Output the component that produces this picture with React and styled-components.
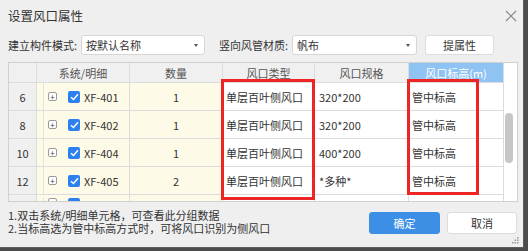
import React from "react"
import styled, { createGlobalStyle } from "styled-components"

const GlobalStyle = createGlobalStyle`
  html, body {
    margin: 0;
    padding: 0;
    background: #4a4d4c;
  }
  body {
    font-family: "Noto Sans CJK SC", "Noto Sans", sans-serif;
    color: #333;
  }
`

const Dialog = styled.div`
  position: relative;
  box-sizing: border-box;
  width: 524px;
  height: 248px;
  padding: 0 5px 0 8px;
  background: #efefef;
  border-right: 1px solid #5c5c5c;
  border-bottom: 1px solid #5c5c5c;
  display: flex;
  flex-direction: column;
`

const TitleBar = styled.div`
  height: 31px;
  display: flex;
  align-items: center;
  justify-content: space-between;
  font-size: 12.5px;
  color: #333;
`

const Close = styled.div`
  width: 12px;
  height: 12px;
  margin-right: 1px;
  display: flex;
`

const Toolbar = styled.div`
  margin-top: 4px;
  height: 20px;
  display: flex;
  align-items: center;
  font-size: 11px;
`

const Label = styled.span`
  width: ${(p) => p.$w}px;
  margin-left: ${(p) => p.$ml || 0}px;
  white-space: nowrap;
`

const Select = styled.div`
  box-sizing: border-box;
  width: ${(p) => p.$w}px;
  height: 20px;
  padding: 0 6px 0 4px;
  background: #fff;
  border: 1px solid #d6d6d6;
  border-radius: 3px;
  display: flex;
  align-items: center;
  justify-content: space-between;
  &::after {
    content: "";
    border-left: 2.5px solid transparent;
    border-right: 2.5px solid transparent;
    border-top: 3px solid #555;
  }
`

const Button = styled.div`
  box-sizing: border-box;
  width: ${(p) => p.$w}px;
  height: ${(p) => p.$h || 20}px;
  margin-left: ${(p) => p.$ml || 0}px;
  display: flex;
  align-items: center;
  justify-content: center;
  font-size: 11px;
  border-radius: 3px;
  background: ${(p) => (p.$primary ? "#3d8fe5" : "#fff")};
  color: ${(p) => (p.$primary ? "#fff" : "#333")};
  border: 1px solid ${(p) => (p.$primary ? "#3d8fe5" : "#dcdcdc")};
`

const Table = styled.div`
  margin-top: 7px;
  height: 140px;
  box-sizing: border-box;
  border: 1px solid #d0d0d0;
  background: #fff;
  display: flex;
  overflow: hidden;
`

const Grid = styled.div`
  display: grid;
  grid-template-columns: 28px 93px 93px 92px 94px 95px;
  grid-template-rows: 20px;
  grid-auto-rows: 28px;
  font-size: 11px;
  align-content: start;
`

const Cell = styled.div`
  box-sizing: border-box;
  border-right: 1px solid #dcdcdc;
  border-bottom: 1px solid #dcdcdc;
  display: flex;
  align-items: center;
  justify-content: ${(p) => (p.$center ? "center" : "flex-start")};
  padding-left: ${(p) => (p.$center ? 0 : p.$pl || 3)}px;
  background: ${(p) =>
    p.$kind === "gray" ? "#f0f0f0" : p.$kind === "yellow" ? "#fdfbe7" : "#fff"};
  color: #333;
  white-space: nowrap;
  overflow: hidden;
`

const Head = styled(Cell)`
  justify-content: center;
  padding-left: 0;
  color: ${(p) => (p.$active ? "#fff" : "#555")};
  background: ${(p) => (p.$active ? "#8fc3f3" : "#f0f0f0")};
`

const TreeCell = styled(Cell)`
  padding-left: 6px;
  background: #fdfbe7;
  align-items: ${(p) => (p.$partial ? "flex-start" : "center")};
  padding-top: ${(p) => (p.$partial ? 3 : 0)}px;
`

const TreeLine = styled.div`
  align-self: stretch;
  border-left: 1px solid #e2e2e2;
  width: 4px;
`

const Plus = styled.div`
  box-sizing: border-box;
  width: 9px;
  height: 9px;
  border: 1px solid #9a9a9a;
  border-radius: 2px;
  background: #fff;
  display: flex;
  align-items: center;
  justify-content: center;
  font-size: 8px;
  line-height: 1;
  color: #444;
  margin-right: 11px;
`

const Check = styled.div`
  width: 12px;
  height: 12px;
  border-radius: 2px;
  background: #2d80f0;
  display: flex;
  align-items: center;
  justify-content: center;
  margin-right: 4px;
`

const Scroll = styled.div`
  width: 13px;
  position: relative;
  background: #fff;
`

const Thumb = styled.div`
  position: absolute;
  left: 1px;
  top: 50px;
  width: 8px;
  height: 50px;
  border-radius: 4px;
  background: #c6c6c6;
`

const Footer = styled.div`
  margin-top: 7px;
  display: flex;
  justify-content: space-between;
  align-items: flex-start;
`

const Notes = styled.div`
  font-size: 11px;
  line-height: 13px;
  color: #333;
`

const Actions = styled.div`
  margin-top: 3px;
  display: flex;
  gap: 7px;
  margin-right: 1px;
`

const Mark = styled.div`
  position: absolute;
  box-sizing: border-box;
  left: ${(p) => p.$x}px;
  top: ${(p) => p.$y}px;
  width: ${(p) => p.$w}px;
  height: ${(p) => p.$h}px;
  border: 3px solid #ee2525;
  pointer-events: none;
`

const Grip = styled.svg`
  position: absolute;
  right: 4px;
  bottom: 3px;
`

const rows = [
  { no: 6, name: "XF-401", qty: 1, type: "单层百叶侧风口", spec: "320*200", elev: "管中标高" },
  { no: 8, name: "XF-402", qty: 1, type: "单层百叶侧风口", spec: "320*200", elev: "管中标高" },
  { no: 10, name: "XF-404", qty: 1, type: "单层百叶侧风口", spec: "400*200", elev: "管中标高" },
  { no: 12, name: "XF-405", qty: 2, type: "单层百叶侧风口", spec: "*多种*", elev: "管中标高" },
]

const CheckIcon = () => (
  <svg width="9" height="8" viewBox="0 0 9 8">
    <path d="M1 4.2 L3.5 6.5 L8 1.3" fill="none" stroke="#fff" strokeWidth="1.5" />
  </svg>
)

export default function App() {
  return (
    <>
      <GlobalStyle />
      <Dialog>
        <TitleBar>
          <span>设置风口属性</span>
          <Close>
            <svg width="12" height="12" viewBox="0 0 12 12">
              <path d="M1 1 L11 11 M11 1 L1 11" stroke="#8a8a8a" strokeWidth="1.2" />
            </svg>
          </Close>
        </TitleBar>
        <Toolbar>
          <Label $w={73}>建立构件模式:</Label>
          <Select $w={124}>按默认名称</Select>
          <Label $w={73} $ml={14}>竖向风管材质:</Label>
          <Select $w={125}>帆布</Select>
          <Button $w={69} $ml={8}>提属性</Button>
        </Toolbar>
        <Table>
          <Grid>
            <Head />
            <Head>系统/明细</Head>
            <Head>数量</Head>
            <Head>风口类型</Head>
            <Head>风口规格</Head>
            <Head $active>风口标高(m)</Head>
            {rows.map((r) => (
              <React.Fragment key={r.no}>
                <Cell $center $kind="gray">{r.no}</Cell>
                <TreeCell>
                  <TreeLine />
                  <Plus>+</Plus>
                  <Check><CheckIcon /></Check>
                  {r.name}
                </TreeCell>
                <Cell $center $kind="yellow">{r.qty}</Cell>
                <Cell $pl={3}>{r.type}</Cell>
                <Cell $pl={4}>{r.spec}</Cell>
                <Cell $pl={3}>{r.elev}</Cell>
              </React.Fragment>
            ))}
            <Cell $kind="gray" />
            <TreeCell $partial>
              <TreeLine />
              <Plus />
              <Check />
            </TreeCell>
            <Cell $kind="yellow" />
            <Cell />
            <Cell />
            <Cell />
          </Grid>
          <Scroll>
            <Thumb />
          </Scroll>
        </Table>
        <Footer>
          <Notes>
            <div>1.双击系统/明细单元格，可查看此分组数据</div>
            <div>2.当标高选为管中标高方式时，可将风口识别为侧风口</div>
          </Notes>
          <Actions>
            <Button $primary $w={71} $h={22}>确定</Button>
            <Button $w={70} $h={22}>取消</Button>
          </Actions>
        </Footer>
        <Mark $x={221} $y={79} $w={94} $h={121} />
        <Mark $x={407} $y={79} $w={72} $h={116} />
        <Grip width="7" height="7" viewBox="0 0 7 7">
          <rect x="5" y="0" width="1.5" height="1.5" fill="#999" />
          <rect x="2.5" y="2.5" width="1.5" height="1.5" fill="#999" />
          <rect x="5" y="2.5" width="1.5" height="1.5" fill="#999" />
          <rect x="0" y="5" width="1.5" height="1.5" fill="#999" />
          <rect x="2.5" y="5" width="1.5" height="1.5" fill="#999" />
          <rect x="5" y="5" width="1.5" height="1.5" fill="#999" />
        </Grip>
      </Dialog>
    </>
  )
}
